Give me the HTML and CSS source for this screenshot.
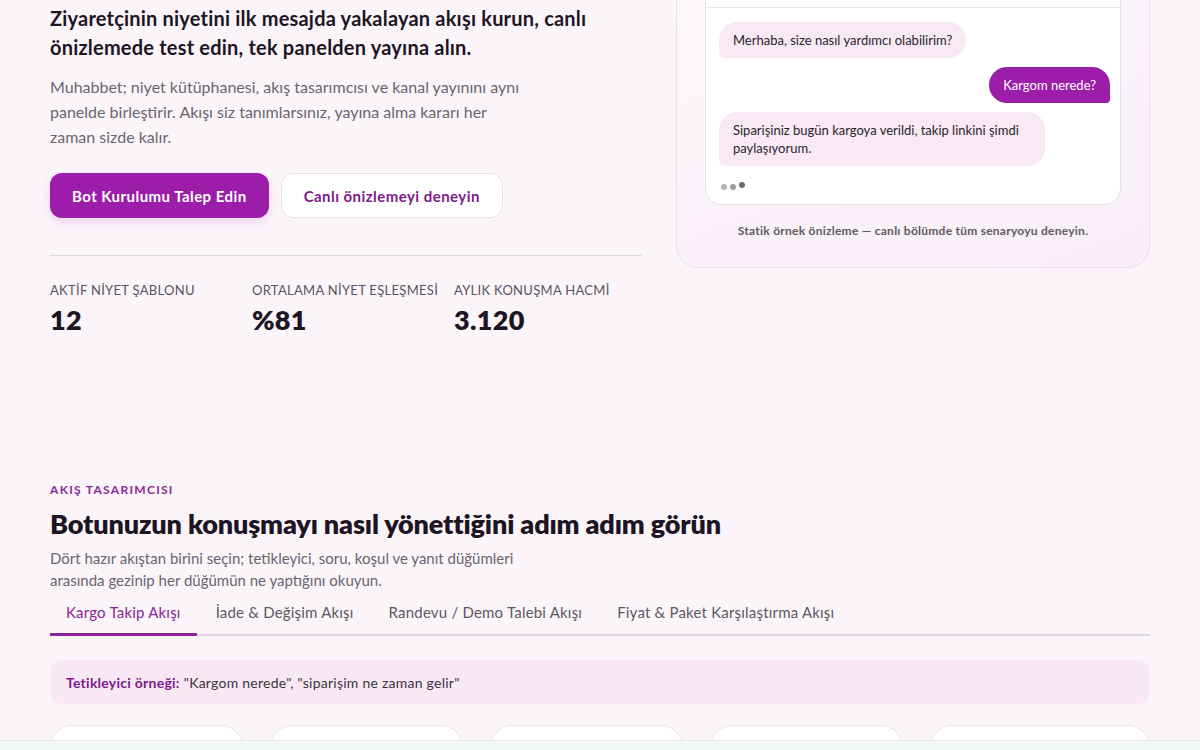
FILE: index.html
```html
<!DOCTYPE html>
<html lang="tr">
<head>
<meta charset="utf-8">
<title>Muhabbet — Akış Tasarımcısı</title>
<link rel="stylesheet" href="styles.css">
</head>
<body>
<main class="page">
  <section class="hero">
    <div class="hero-copy">
      <p class="lead">Ziyaretçinin niyetini ilk mesajda yakalayan akışı kurun, canlı önizlemede test edin, tek panelden yayına alın.</p>
      <p class="intro">Muhabbet; niyet kütüphanesi, akış tasarımcısı ve kanal yayınını aynı panelde birleştirir. Akışı siz tanımlarsınız, yayına alma kararı her zaman sizde kalır.</p>
      <div class="actions">
        <a class="btn btn-primary" href="#">Bot Kurulumu Talep Edin</a>
        <a class="btn btn-ghost" href="#">Canlı önizlemeyi deneyin</a>
      </div>
      <dl class="stats">
        <div class="stat">
          <dt>Aktif niyet şablonu</dt>
          <dd>12</dd>
        </div>
        <div class="stat">
          <dt>Ortalama niyet eşleşmesi</dt>
          <dd>%81</dd>
        </div>
        <div class="stat">
          <dt>Aylık konuşma hacmi</dt>
          <dd>3.120</dd>
        </div>
      </dl>
    </div>

    <aside class="preview">
      <div class="chat">
        <div class="chat-head">
          <span class="skeleton"></span>
          <span class="skeleton short"></span>
        </div>
        <div class="chat-body">
          <p class="bubble bot">Merhaba, size nasıl yardımcı olabilirim?</p>
          <p class="bubble user">Kargom nerede?</p>
          <p class="bubble bot">Siparişiniz bugün kargoya verildi, takip linkini şimdi paylaşıyorum.</p>
          <div class="typing"><span></span><span></span><span></span></div>
        </div>
      </div>
      <p class="preview-note">Statik örnek önizleme — canlı bölümde tüm senaryoyu deneyin.</p>
    </aside>
  </section>

  <section class="designer">
    <p class="eyebrow">Akış Tasarımcısı</p>
    <h2>Botunuzun konuşmayı nasıl yönettiğini adım adım görün</h2>
    <p class="designer-intro">Dört hazır akıştan birini seçin; tetikleyici, soru, koşul ve yanıt düğümleri arasında gezinip her düğümün ne yaptığını okuyun.</p>

    <div class="tabs" role="tablist">
      <button class="tab is-active" role="tab">Kargo Takip Akışı</button>
      <button class="tab" role="tab">İade &amp; Değişim Akışı</button>
      <button class="tab" role="tab">Randevu / Demo Talebi Akışı</button>
      <button class="tab" role="tab">Fiyat &amp; Paket Karşılaştırma Akışı</button>
    </div>

    <div class="trigger"><strong>Tetikleyici örneği:</strong> "Kargom nerede", "siparişim ne zaman gelir"</div>

    <div class="nodes">
      <div class="node"></div>
      <div class="node"></div>
      <div class="node"></div>
      <div class="node"></div>
      <div class="node"></div>
    </div>
  </section>
</main>
<div class="bottom-bar"></div>
</body>
</html>
```

FILE: styles.css
```css
* {
  box-sizing: border-box;
}

html,
body {
  margin: 0;
  padding: 0;
}

body {
  background: #fbf5fa;
  color: #1e1424;
  font-family: "Segoe UI", Lato, "Noto Sans", sans-serif;
  overflow: hidden;
}

.page {
  width: 1100px;
  margin: 0 auto;
  padding-top: 4px;
}

/* ---------- hero ---------- */

.hero {
  display: grid;
  grid-template-columns: 592px 474px;
  column-gap: 34px;
  align-items: start;
}

.lead {
  margin: 0;
  font-size: 20px;
  line-height: 29px;
  font-weight: 700;
  letter-spacing: 0.2px;
  color: #1e1424;
}

.intro {
  margin: 12px 0 0;
  font-size: 16px;
  line-height: 25px;
  color: #6b6470;
  max-width: 480px;
}

.actions {
  display: flex;
  gap: 12px;
  margin-top: 24px;
}

.btn {
  display: inline-flex;
  align-items: center;
  justify-content: center;
  height: 45px;
  padding: 0 22px;
  border-radius: 12px;
  font-size: 15px;
  font-weight: 700;
  letter-spacing: 0.45px;
  text-decoration: none;
}

.btn-primary {
  background: #9b1daa;
  color: #fff;
  box-shadow: 0 4px 10px rgba(155, 29, 170, 0.16);
}

.btn-ghost {
  background: #fff;
  color: #7e1a8c;
  border: 1px solid #ecdfe8;
}

.stats {
  display: grid;
  grid-template-columns: repeat(3, 190px);
  column-gap: 12px;
  margin: 37px 0 0;
  padding-top: 25px;
  border-top: 1px solid #e2d8df;
}

.stat dt {
  font-size: 13px;
  line-height: 18px;
  letter-spacing: 0.3px;
  text-transform: uppercase;
  color: #5b5361;
  white-space: nowrap;
}

.stat dd {
  margin: 5px 0 0;
  font-size: 27px;
  line-height: 32px;
  font-weight: 800;
  letter-spacing: 0.3px;
  color: #1e1424;
}

/* ---------- chat preview card ---------- */

.preview {
  margin-top: -64px;
  padding: 28px 28px 27px;
  border: 1px solid #ecdde8;
  border-radius: 22px;
  background: linear-gradient(160deg, #fdf9fc 0%, #f9eef6 100%);
}

.chat {
  background: #fff;
  border: 1px solid #e7e0e6;
  border-radius: 16px;
  overflow: hidden;
}

.chat-head {
  display: flex;
  gap: 10px;
  height: 38px;
  padding: 14px 16px;
  border-bottom: 1px solid #ebe5ea;
}

.skeleton {
  display: block;
  width: 120px;
  height: 8px;
  border-radius: 4px;
  background: #f4eff3;
}

.skeleton.short {
  width: 60px;
}

.chat-body {
  display: flex;
  flex-direction: column;
  align-items: flex-start;
  gap: 9px;
  padding: 14px 10px 8px 13px;
}

.bubble {
  margin: 0;
  max-width: 326px;
  padding: 9px 14px;
  font-size: 13px;
  line-height: 18px;
  border-radius: 18px;
}

.bubble.bot {
  background: #f8e9f4;
  color: #2b2330;
  border-bottom-left-radius: 6px;
}

.bubble.user {
  align-self: flex-end;
  background: #9b1daa;
  color: #fff;
  border-bottom-right-radius: 4px;
}

.typing {
  display: flex;
  align-items: center;
  gap: 3px;
  height: 18px;
  margin-top: 3px;
  padding-left: 2px;
}

.typing span {
  width: 6px;
  height: 6px;
  border-radius: 50%;
  background: #b7b2b8;
}

.typing span:nth-child(2) {
  background: #a29ea4;
}

.typing span:nth-child(3) {
  background: #6e6a70;
  transform: translateY(-2px);
}

.preview-note {
  margin: 17px 0 0;
  text-align: center;
  font-size: 12px;
  line-height: 18px;
  font-weight: 700;
  letter-spacing: 0.25px;
  color: #5f5a64;
}

/* ---------- flow designer ---------- */

.designer {
  margin-top: 146px;
}

.eyebrow {
  margin: 0;
  font-size: 12px;
  line-height: 16px;
  font-weight: 700;
  letter-spacing: 1.3px;
  text-transform: uppercase;
  color: #8a2a98;
}

.designer h2 {
  margin: 9px 0 0;
  font-size: 27px;
  line-height: 34px;
  font-weight: 800;
  letter-spacing: -0.15px;
  color: #1e1424;
}

.designer-intro {
  margin: 6px 0 0;
  max-width: 480px;
  font-size: 15px;
  line-height: 22px;
  color: #6b6470;
}

.tabs {
  display: flex;
  gap: 3px;
  margin-top: 8px;
  border-bottom: 2px solid #e2d6e0;
}

.tab {
  margin-bottom: -2px;
  padding: 2px 16px 10px;
  border: 0;
  border-bottom: 3px solid transparent;
  background: none;
  font-family: inherit;
  font-size: 15px;
  line-height: 22px;
  letter-spacing: 0.2px;
  color: #5e5763;
  cursor: pointer;
}

.tab.is-active {
  color: #8a2699;
  border-bottom-color: #8a2699;
}

.trigger {
  margin-top: 24px;
  height: 44px;
  padding: 0 16px;
  display: flex;
  align-items: center;
  gap: 4px;
  border-radius: 12px;
  background: #f8e8f4;
  font-size: 14px;
  letter-spacing: 0.25px;
  color: #3b3340;
}

.trigger strong {
  color: #7e1a8c;
}

.nodes {
  display: grid;
  grid-template-columns: repeat(4, 193px) 1fr;
  column-gap: 27px;
  margin-top: 21px;
}

.node {
  height: 90px;
  background: #fff;
  border: 1px solid #ebe3ea;
  border-radius: 22px;
}

/* fixed strip along the viewport bottom */
.bottom-bar {
  position: fixed;
  left: 0;
  right: 0;
  bottom: 0;
  height: 10px;
  background: #f3f7f8;
  border-top: 1px solid #e6e9ed;
}
```
